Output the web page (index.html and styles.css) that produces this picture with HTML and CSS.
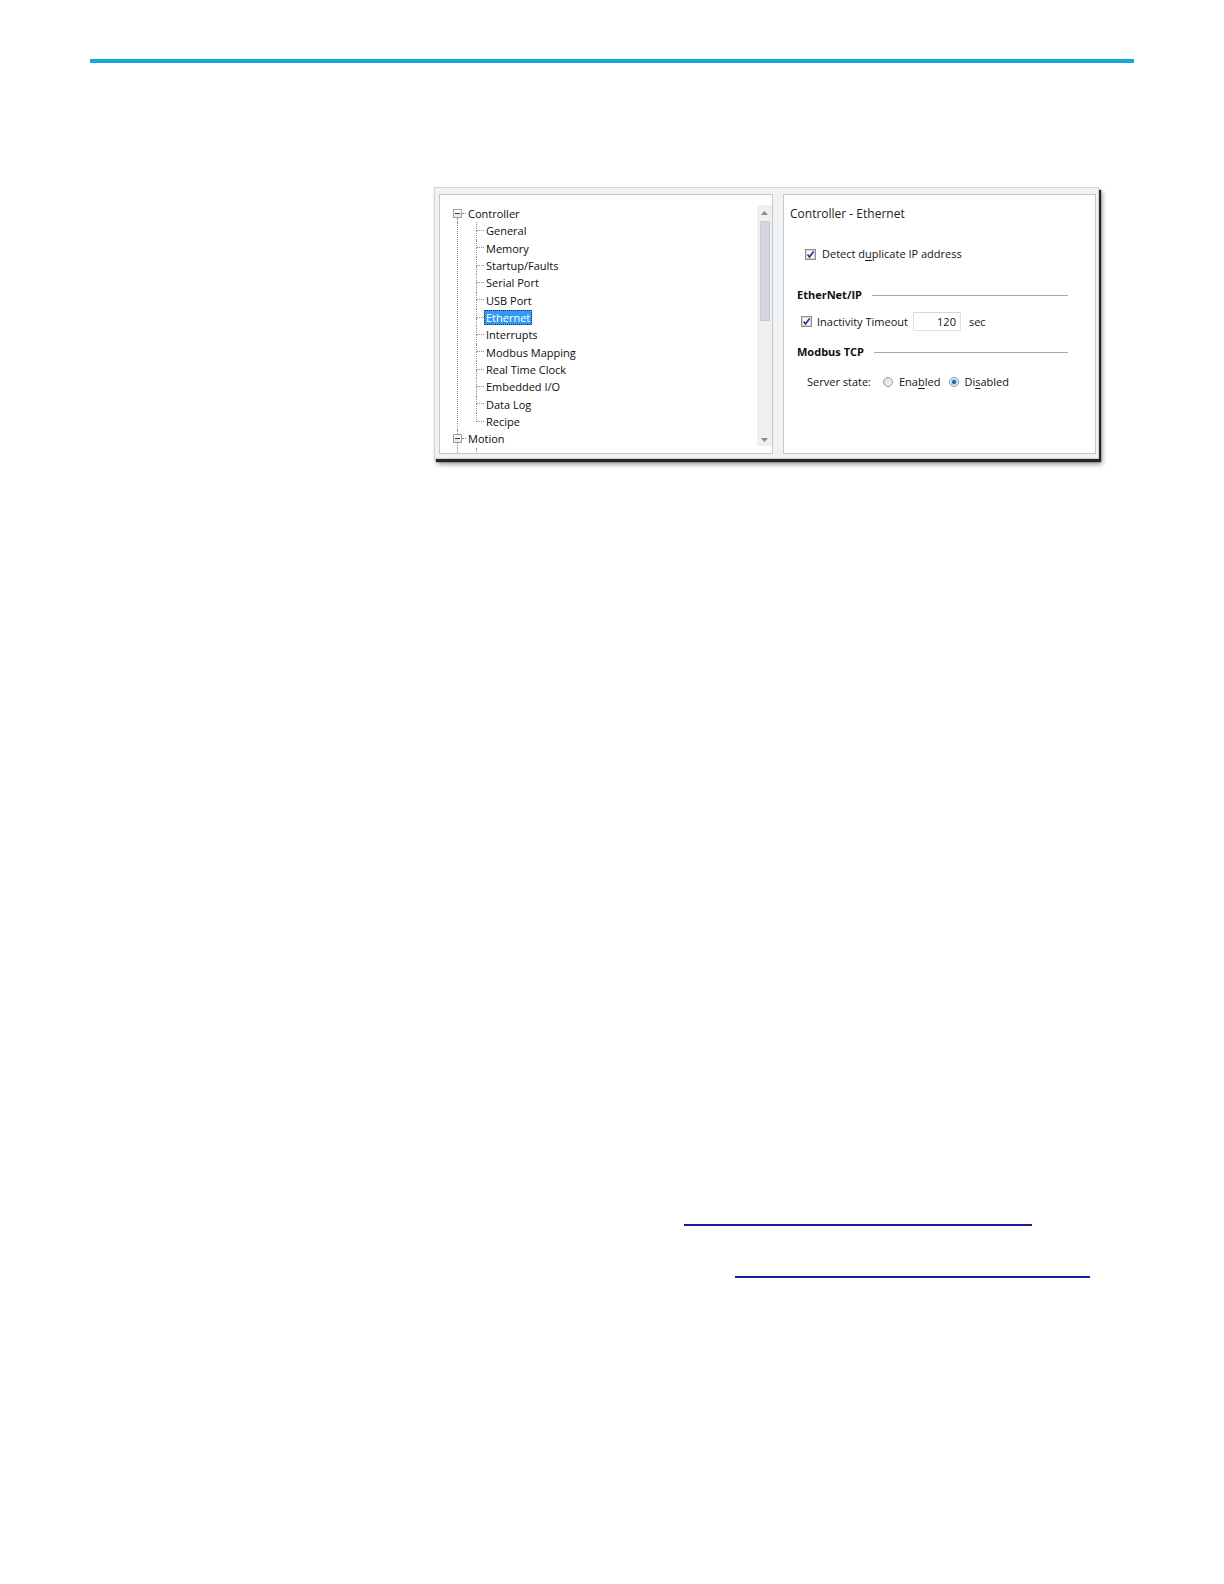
FILE: index.html
```html
<!DOCTYPE html>
<html lang="en">
<head>
<meta charset="utf-8">
<title>Controller - Ethernet</title>
<link rel="stylesheet" href="styles.css">
</head>
<body>
<div class="topbar"></div>

<div class="figure">
  <div class="panel tree-panel">
    <div class="tree">
      <div class="root-row">
        <span class="exp first"><span class="seg-top"></span><span class="box"><span class="minus"></span></span><span class="seg-bot"></span></span>
        <span class="hconn"></span>
        <span class="label">Controller</span>
      </div>
      <div class="children">
        <div class="child-row"><span class="spacer"></span><span class="conn"><span class="ca"></span><span class="cb"></span></span><span class="label">General</span></div>
        <div class="child-row"><span class="spacer"></span><span class="conn"><span class="ca"></span><span class="cb"></span></span><span class="label">Memory</span></div>
        <div class="child-row"><span class="spacer"></span><span class="conn"><span class="ca"></span><span class="cb"></span></span><span class="label">Startup/Faults</span></div>
        <div class="child-row"><span class="spacer"></span><span class="conn"><span class="ca"></span><span class="cb"></span></span><span class="label">Serial Port</span></div>
        <div class="child-row"><span class="spacer"></span><span class="conn"><span class="ca"></span><span class="cb"></span></span><span class="label">USB Port</span></div>
        <div class="child-row"><span class="spacer"></span><span class="conn"><span class="ca"></span><span class="cb"></span></span><span class="label selected">Ethernet</span></div>
        <div class="child-row"><span class="spacer"></span><span class="conn"><span class="ca"></span><span class="cb"></span></span><span class="label">Interrupts</span></div>
        <div class="child-row"><span class="spacer"></span><span class="conn"><span class="ca"></span><span class="cb"></span></span><span class="label">Modbus Mapping</span></div>
        <div class="child-row"><span class="spacer"></span><span class="conn"><span class="ca"></span><span class="cb"></span></span><span class="label">Real Time Clock</span></div>
        <div class="child-row"><span class="spacer"></span><span class="conn"><span class="ca"></span><span class="cb"></span></span><span class="label">Embedded I/O</span></div>
        <div class="child-row"><span class="spacer"></span><span class="conn"><span class="ca"></span><span class="cb"></span></span><span class="label">Data Log</span></div>
        <div class="child-row last"><span class="spacer"></span><span class="conn"><span class="ca"></span><span class="cb"></span></span><span class="label">Recipe</span></div>
      </div>
      <div class="root-row">
        <span class="exp"><span class="seg-top"></span><span class="box"><span class="minus"></span></span><span class="seg-bot"></span></span>
        <span class="hconn"></span>
        <span class="label">Motion</span>
      </div>
      <div class="children">
        <div class="child-row"><span class="spacer"></span><span class="conn"><span class="ca"></span><span class="cb"></span></span></div>
      </div>
    </div>
    <div class="scrollbar">
      <span class="arrow up"><svg width="7" height="4" viewBox="0 0 7 4"><path d="M0 4 L3.5 0 L7 4 Z" fill="#8a8a8a"/></svg></span>
      <span class="thumb"></span>
      <span class="track-fill"></span>
      <span class="arrow down"><svg width="7" height="4" viewBox="0 0 7 4"><path d="M0 0 L3.5 4 L7 0 Z" fill="#8a8a8a"/></svg></span>
    </div>
  </div>

  <div class="panel form-panel">
    <div class="title">Controller - Ethernet</div>

    <div class="row detect">
      <svg class="check" width="11" height="11" viewBox="0 0 11 11"><rect x="0.5" y="0.5" width="10" height="10" fill="#f4f4f4" stroke="#8e8f8f"/><rect x="1.5" y="1.5" width="8" height="8" fill="#fdfdfd" stroke="#d4d4d4"/><path d="M2.6 5.6 L4.5 8.1 L8.6 2.4" fill="none" stroke="#2b3590" stroke-width="1.7"/></svg>
      <span class="txt">Detect d<u>u</u>plicate IP address</span>
    </div>

    <div class="section eip">
      <span class="sec-title">EtherNet/IP</span>
      <span class="rule"></span>
    </div>

    <div class="row inact">
      <svg class="check" width="11" height="11" viewBox="0 0 11 11"><rect x="0.5" y="0.5" width="10" height="10" fill="#f4f4f4" stroke="#8e8f8f"/><rect x="1.5" y="1.5" width="8" height="8" fill="#fdfdfd" stroke="#d4d4d4"/><path d="M2.6 5.6 L4.5 8.1 L8.6 2.4" fill="none" stroke="#2b3590" stroke-width="1.7"/></svg>
      <span class="txt">Inactivity Timeout</span>
      <span class="num">120</span>
      <span class="unit">sec</span>
    </div>

    <div class="section mtcp">
      <span class="sec-title">Modbus TCP</span>
      <span class="rule"></span>
    </div>

    <div class="row server">
      <span class="txt">Server state:</span>
      <svg class="radio r1" width="10" height="10" viewBox="0 0 10 10"><defs><linearGradient id="rg" x1="0" y1="0" x2="1" y2="1"><stop offset="0" stop-color="#d6d6d6"/><stop offset="1" stop-color="#fbfbfb"/></linearGradient></defs><circle cx="5" cy="5" r="4.5" fill="url(#rg)" stroke="#9a9a9a"/></svg>
      <span class="txt opt">Ena<u>b</u>led</span>
      <svg class="radio r2" width="10" height="10" viewBox="0 0 10 10"><circle cx="5" cy="5" r="4.5" fill="#e8eef4" stroke="#8a9aa8"/><circle cx="5" cy="5" r="3" fill="#9fd0f2"/><circle cx="5" cy="5" r="2" fill="#1f64b0"/></svg>
      <span class="txt opt2">Di<u>s</u>abled</span>
    </div>
  </div>
</div>

<a class="xref xref1" href="#"></a>
<a class="xref xref2" href="#"></a>
</body>
</html>
```

FILE: styles.css
```css
* { box-sizing: border-box; }

body {
  margin: 0;
  background: #ffffff;
  font-family: "Open Sans", "DejaVu Sans", sans-serif;
  color: #111111;
}

.topbar {
  margin: 59px 0 0 90px;
  width: 1044px;
  height: 4px;
  background: #17a6d8;
}

/* screenshot frame */
.figure {
  margin: 124px 0 0 434px;
  width: 665px;
  height: 272px;
  display: flex;
  gap: 10px;
  padding: 6px 2px 4px 4px;
  background: #f2f2f2;
  border: 1px solid #d2d2d2;
  box-shadow: 2px 3px 1px #262626, 3px 5px 5px rgba(0, 0, 0, 0.45);
}

.panel {
  background: #ffffff;
  border: 1px solid #bccbd6;
  height: 260px;
  overflow: hidden;
}

/* ---------- tree ---------- */
.tree-panel {
  width: 334px;
  display: flex;
}

.tree {
  flex: 1;
  padding: 10px 0 0 13px;
  font-size: 11px;
  color: #0d0d0d;
}

.root-row,
.child-row {
  height: 17.33px;
  display: flex;
  align-items: center;
}

.exp {
  width: 9px;
  height: 100%;
  display: flex;
  flex-direction: column;
}

.seg-top {
  height: 4.17px;
  margin-left: 4px;
  border-left: 1px dotted #8f8f8f;
}

.exp.first .seg-top { border-left-color: transparent; }

.box {
  width: 9px;
  height: 9px;
  border: 1px solid #a0a0a0;
  background: linear-gradient(#ffffff, #e4e4e4);
  display: flex;
  align-items: center;
  justify-content: center;
}

.minus {
  width: 5px;
  height: 1px;
  background: #3c3c3c;
}

.seg-bot {
  flex: 1;
  margin-left: 4px;
  border-left: 1px dotted #8f8f8f;
}

.hconn {
  width: 4px;
  height: 0;
  border-top: 1px dotted #8f8f8f;
}

.children {
  margin-left: 4px;
  border-left: 1px dotted #8f8f8f;
}

.spacer { width: 18px; }

.conn {
  width: 8px;
  height: 100%;
  display: flex;
  flex-direction: column;
}

.ca {
  height: 8.67px;
  border-left: 1px dotted #8f8f8f;
  border-bottom: 1px dotted #8f8f8f;
}

.cb {
  flex: 1;
  border-left: 1px dotted #8f8f8f;
}

.child-row.last .cb { border-left-color: transparent; }

.label {
  height: 15px;
  line-height: 13px;
  padding: 0 1px;
  border: 1px solid transparent;
  white-space: nowrap;
}

.label.selected {
  background: #3399f3;
  color: #ffffff;
  border: 1px dotted #14345c;
}

/* scrollbar */
.scrollbar {
  width: 15px;
  margin: 10px 0 7px 0;
  background: #f0f0f0;
  display: flex;
  flex-direction: column;
  align-items: center;
}

.arrow {
  width: 100%;
  display: flex;
  align-items: center;
  justify-content: center;
}

.arrow svg { display: block; }

.arrow.up { height: 15px; }
.arrow.down { height: 12px; }

.thumb {
  width: 10px;
  height: 100px;
  margin: 1px 0 0 1px;
  background: #d4d7db;
  border: 1px solid #c8cbd0;
}

.track-fill { flex: 1; }

/* ---------- form ---------- */
.form-panel {
  width: 313px;
  padding: 11px 27px 0 6px;
  display: flex;
  flex-direction: column;
  font-size: 11px;
  color: #141414;
}

.title {
  font-size: 12px;
  line-height: 16px;
  height: 16px;
  color: #222222;
}

.row {
  display: flex;
  align-items: center;
  height: 16px;
  line-height: 16px;
  white-space: nowrap;
}

.check, .radio { display: block; flex: none; }

.row.detect { margin: 24px 0 0 15px; }
.row.detect .txt { margin-left: 6px; }

.section {
  display: flex;
  align-items: center;
  height: 16px;
  line-height: 16px;
  margin-left: 7px;
  font-weight: 700;
  color: #111111;
}

.section.eip { margin-top: 25px; }
.section.mtcp { margin-top: 13px; }

.rule {
  flex: 1;
  height: 1px;
  margin-left: 10px;
  background: #a9a9a9;
}

.row.inact {
  margin: 9px 0 0 11px;
  height: 19px;
}

.row.inact .txt { margin-left: 5px; }

.num {
  margin-left: 5px;
  width: 48px;
  height: 19px;
  line-height: 17px;
  border: 1px solid #e0e0e0;
  border-top-color: #d6d6d6;
  text-align: right;
  padding-right: 4px;
}

.unit { margin-left: 8px; }

.row.server { margin: 14px 0 0 17px; }
.radio.r1 { margin-left: 12px; }
.txt.opt { margin-left: 6px; }
.radio.r2 { margin-left: 9px; }
.txt.opt2 { margin-left: 5px; }

u { text-decoration-thickness: 1px; text-underline-offset: 2px; }

/* cross-reference links (text not visible in the source) */
.xref {
  display: block;
  height: 2px;
  border-bottom: 2px solid #1c1c9e;
}

.xref1 {
  margin: 765px 0 0 684px;
  width: 348px;
}

.xref2 {
  margin: 50px 0 0 735px;
  width: 355px;
}
```
